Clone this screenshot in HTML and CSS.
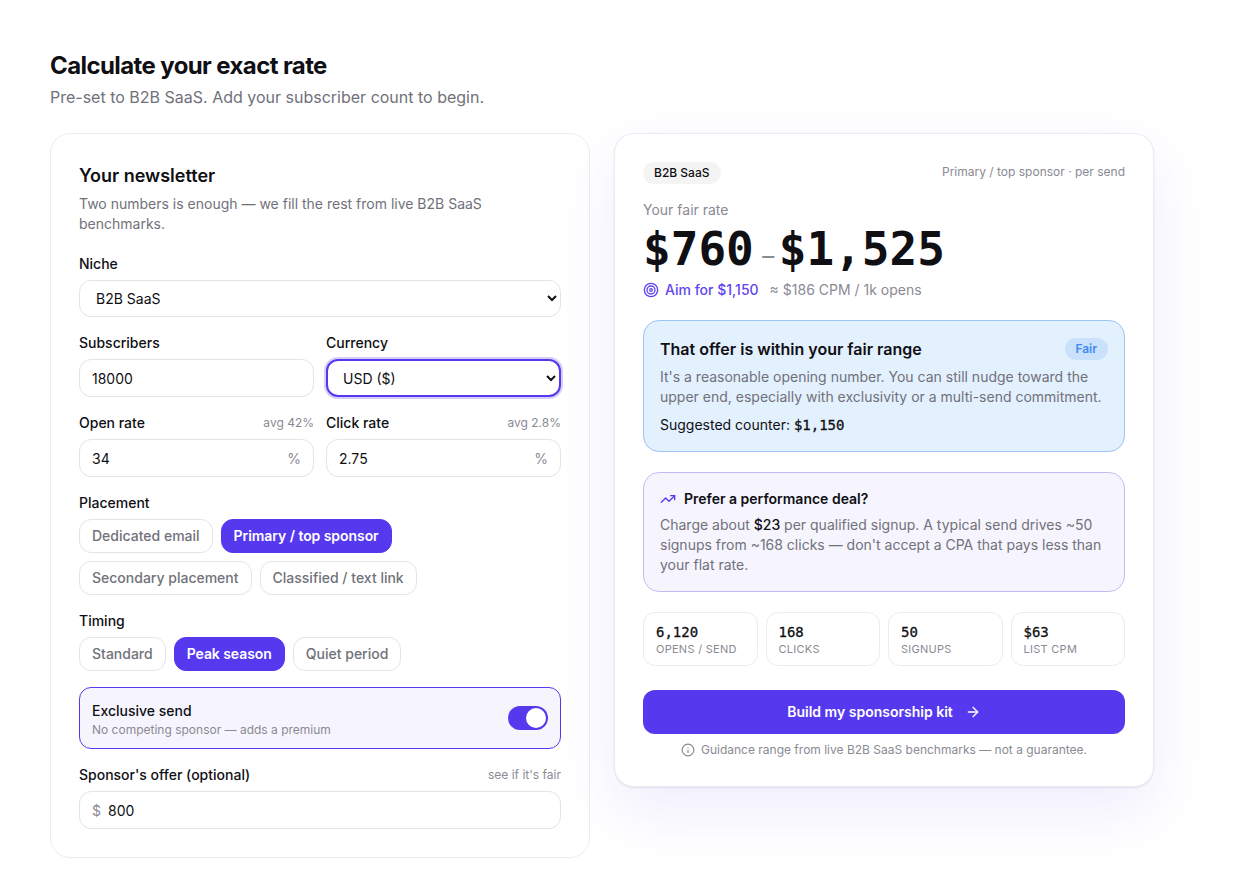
FILE: index.html
```html
<!DOCTYPE html>
<html lang="en">
<head>
    <meta charset="UTF-8">
    <meta name="viewport" content="width=device-width, initial-scale=1.0">
    <title>Calculate your exact rate</title>
    <link rel="stylesheet" href="styles.css">
</head>
<body>
    <main class="page">
        <h1>Calculate your exact rate</h1>
        <p class="subtitle">Pre-set to B2B SaaS. Add your subscriber count to begin.</p>

        <div class="columns">
            <!-- Form -->
            <section class="card form-card">
                <h2>Your newsletter</h2>
                <p class="card-desc">Two numbers is enough — we fill the rest from live B2B SaaS benchmarks.</p>

                <div class="field niche-field">
                    <div class="label-row"><label>Niche</label></div>
                    <select class="control">
                        <option>B2B SaaS</option>
                    </select>
                </div>

                <div class="field-grid">
                    <div class="field">
                        <div class="label-row"><label>Subscribers</label></div>
                        <div class="control input-wrap"><input type="text" value="18000"></div>
                    </div>
                    <div class="field">
                        <div class="label-row"><label>Currency</label></div>
                        <select class="control is-focused">
                            <option>USD ($)</option>
                        </select>
                    </div>
                </div>

                <div class="field-grid">
                    <div class="field">
                        <div class="label-row"><label>Open rate</label><span class="hint">avg 42%</span></div>
                        <div class="control input-wrap"><input type="text" value="34"><span class="unit">%</span></div>
                    </div>
                    <div class="field">
                        <div class="label-row"><label>Click rate</label><span class="hint">avg 2.8%</span></div>
                        <div class="control input-wrap"><input type="text" value="2.75"><span class="unit">%</span></div>
                    </div>
                </div>

                <div class="field">
                    <div class="label-row"><label>Placement</label></div>
                    <div class="chips">
                        <button class="chip">Dedicated email</button>
                        <button class="chip active">Primary / top sponsor</button>
                        <button class="chip">Secondary placement</button>
                        <button class="chip">Classified / text link</button>
                    </div>
                </div>

                <div class="field">
                    <div class="label-row"><label>Timing</label></div>
                    <div class="chips">
                        <button class="chip">Standard</button>
                        <button class="chip active">Peak season</button>
                        <button class="chip">Quiet period</button>
                    </div>
                </div>

                <div class="exclusive">
                    <div>
                        <div class="exclusive-title">Exclusive send</div>
                        <div class="exclusive-desc">No competing sponsor — adds a premium</div>
                    </div>
                    <span class="toggle"><span class="knob"></span></span>
                </div>

                <div class="field">
                    <div class="label-row"><label>Sponsor's offer (optional)</label><span class="hint">see if it's fair</span></div>
                    <div class="control input-wrap"><span class="prefix">$</span><input type="text" value="800"></div>
                </div>
            </section>

            <!-- Result -->
            <section class="card result-card">
                <div class="result-top">
                    <span class="pill">B2B SaaS</span>
                    <span class="result-meta">Primary / top sponsor · per send</span>
                </div>

                <div class="fair-label">Your fair rate</div>
                <div class="rate">$760<span class="rate-dash">–</span>$1,525</div>
                <div class="aim-row">
                    <span class="aim">
                        <svg width="16" height="16" viewBox="0 0 24 24" fill="none" stroke="currentColor" stroke-width="2"><circle cx="12" cy="12" r="10"/><circle cx="12" cy="12" r="6"/><circle cx="12" cy="12" r="2"/></svg>
                        Aim for $1,150
                    </span>
                    <span class="cpm">≈ $186 CPM / 1k opens</span>
                </div>

                <div class="notice fair-box">
                    <div class="notice-head">
                        <h3>That offer is within your fair range</h3>
                        <span class="fair-tag">Fair</span>
                    </div>
                    <p>It's a reasonable opening number. You can still nudge toward the upper end, especially with exclusivity or a multi-send commitment.</p>
                    <div class="counter">Suggested counter: <b class="mono">$1,150</b></div>
                </div>

                <div class="notice perf-box">
                    <div class="perf-head">
                        <svg width="16" height="16" viewBox="0 0 24 24" fill="none" stroke="#5639ee" stroke-width="2" stroke-linecap="round" stroke-linejoin="round"><polyline points="22 7 13.5 15.5 8.5 10.5 2 17"/><polyline points="16 7 22 7 22 13"/></svg>
                        <h4>Prefer a performance deal?</h4>
                    </div>
                    <p>Charge about <b>$23</b> per qualified signup. A typical send drives ~50 signups from ~168 clicks — don't accept a CPA that pays less than your flat rate.</p>
                </div>

                <div class="stats">
                    <div class="stat"><div class="stat-num">6,120</div><div class="stat-label">Opens / send</div></div>
                    <div class="stat"><div class="stat-num">168</div><div class="stat-label">Clicks</div></div>
                    <div class="stat"><div class="stat-num">50</div><div class="stat-label">Signups</div></div>
                    <div class="stat"><div class="stat-num">$63</div><div class="stat-label">List CPM</div></div>
                </div>

                <button class="cta">
                    Build my sponsorship kit
                    <svg width="16" height="16" viewBox="0 0 24 24" fill="none" stroke="currentColor" stroke-width="2" stroke-linecap="round" stroke-linejoin="round"><path d="M5 12h14"/><path d="m12 5 7 7-7 7"/></svg>
                </button>
                <div class="footnote">
                    <svg width="14" height="14" viewBox="0 0 24 24" fill="none" stroke="currentColor" stroke-width="2" stroke-linecap="round" stroke-linejoin="round"><circle cx="12" cy="12" r="10"/><path d="M12 16v-4"/><path d="M12 8h.01"/></svg>
                    Guidance range from live B2B SaaS benchmarks — not a guarantee.
                </div>
            </section>
        </div>
    </main>
</body>
</html>
```

FILE: styles.css
```css
* {
    margin: 0;
    padding: 0;
    box-sizing: border-box;
}

body {
    font-family: Inter, "Liberation Sans", sans-serif;
    background: #fff;
    color: #0f0f14;
    font-size: 14px;
}

.page {
    width: 1104px;
    margin-left: 50px;
    padding-top: 50px;
    padding-bottom: 36px;
}

h1 {
    font-size: 24px;
    line-height: 32px;
    font-weight: 700;
    letter-spacing: -0.025em;
}

.subtitle {
    font-size: 16px;
    line-height: 24px;
    color: #71717a;
    margin-top: 3px;
}

.columns {
    display: grid;
    grid-template-columns: 540px 540px;
    gap: 24px;
    align-items: start;
    margin-top: 24px;
}

.card {
    background: #fff;
    border: 1px solid #ececf0;
    border-radius: 20px;
    padding: 28px;
}

.result-card {
    box-shadow: 0 1px 2px rgba(15, 15, 20, 0.08), 0 24px 60px rgba(86, 57, 238, 0.09);
}

h2 {
    font-size: 18px;
    line-height: 28px;
    font-weight: 600;
}

.card-desc {
    font-size: 14px;
    line-height: 20px;
    color: #71717a;
    margin-top: 4px;
}

.field {
    display: flex;
    flex-direction: column;
    margin-top: 16px;
}

.niche-field {
    margin-top: 20px;
}

.field-grid {
    display: grid;
    grid-template-columns: repeat(2, minmax(0, 1fr));
    gap: 12px;
}

.label-row {
    display: flex;
    justify-content: space-between;
    align-items: flex-start;
    height: 20px;
    margin-bottom: 6px;
}

label {
    font-size: 14px;
    line-height: 20px;
    font-weight: 500;
}

.hint {
    font-size: 12px;
    line-height: 20px;
    color: #8a8a93;
}

.control {
    width: 100%;
    height: 38px;
    background: #fff;
    border: 1px solid #e4e4e8;
    border-radius: 12px;
    font-family: inherit;
    font-size: 14px;
    color: #0f0f14;
}

select.control {
    padding: 0 8px 0 12px;
}

.niche-field select.control {
    height: 37px;
}

select.is-focused {
    border: 2px solid #5639ee;
    box-shadow: 0 0 0 2px rgba(86, 57, 238, 0.25);
    padding-left: 11px;
    padding-right: 7px;
}

.input-wrap {
    display: flex;
    align-items: center;
    padding: 0 12px;
}

.input-wrap input {
    flex: 1;
    min-width: 0;
    border: none;
    outline: none;
    background: transparent;
    font-family: inherit;
    font-size: 14px;
    color: #0f0f14;
}

.unit,
.prefix {
    color: #8a8a93;
    font-size: 14px;
}

.prefix {
    margin-right: 7px;
}

.chips {
    display: flex;
    flex-wrap: wrap;
    gap: 8px;
}

.chip {
    height: 34px;
    padding: 0 12px 1px;
    background: #fff;
    border: 1px solid #e4e4e8;
    border-radius: 12px;
    font-family: inherit;
    font-size: 14px;
    font-weight: 500;
    color: #71717a;
}

.chip.active {
    background: #5639ee;
    border-color: #5639ee;
    color: #fff;
    font-weight: 600;
    letter-spacing: -0.06px;
}

.exclusive {
    display: flex;
    justify-content: space-between;
    align-items: center;
    height: 62px;
    margin-top: 16px;
    padding: 0 12px;
    background: #f6f5fe;
    border: 1px solid #5639ee;
    border-radius: 12px;
}

.exclusive-title {
    font-size: 14px;
    line-height: 20px;
    font-weight: 500;
    margin-top: 2px;
}

.exclusive-desc {
    font-size: 12px;
    line-height: 16px;
    color: #8a8a93;
    margin-top: 1px;
}

.toggle {
    display: flex;
    justify-content: flex-end;
    align-items: center;
    width: 40px;
    height: 24px;
    padding: 2px;
    background: #5639ee;
    border-radius: 12px;
}

.knob {
    width: 20px;
    height: 20px;
    background: #fff;
    border-radius: 50%;
}

.result-top {
    display: flex;
    justify-content: space-between;
    align-items: flex-start;
}

.pill {
    padding: 0 11px;
    height: 22px;
    line-height: 22px;
    background: #f4f4f5;
    border-radius: 11px;
    font-size: 12px;
    font-weight: 500;
}

.result-meta {
    font-size: 12px;
    line-height: 20px;
    color: #8a8a93;
}

.fair-label {
    margin-top: 16px;
    font-size: 14px;
    line-height: 20px;
    color: #8a8a93;
}

.rate {
    font-family: "DejaVu Sans Mono", "Liberation Mono", monospace;
    font-size: 46px;
    line-height: 48px;
    font-weight: 700;
    display: flex;
    align-items: center;
    padding-top: 4px;
    height: 54px;
}

.rate-dash {
    font-family: Inter, sans-serif;
    font-size: 24px;
    line-height: 1;
    font-weight: 400;
    color: #8a8a93;
    width: 25px;
    padding-left: 4px;
    text-align: center;
    margin-top: 14px;
}

.aim-row {
    display: flex;
    align-items: center;
    gap: 11px;
    margin-top: 6px;
    font-size: 14px;
    line-height: 20px;
}

.aim {
    display: flex;
    align-items: center;
    gap: 6px;
    color: #5f45f0;
    font-weight: 500;
}

.cpm {
    color: #8a8a93;
}

.notice {
    border-radius: 16px;
    padding: 16px;
}

.notice p {
    font-size: 14px;
    line-height: 20px;
    color: #71717a;
}

.fair-box {
    margin-top: 20px;
    height: 132px;
    background: #e3f0fd;
    border: 1px solid #9cc5f3;
}

.notice-head {
    display: flex;
    justify-content: space-between;
    align-items: center;
    margin-bottom: 6px;
}

h3 {
    font-size: 16px;
    line-height: 24px;
    font-weight: 600;
}

.fair-tag {
    height: 22px;
    line-height: 22px;
    padding: 0 11px 0 10.5px;
    background: #c9e1fb;
    border-radius: 11px;
    color: #3b8bf0;
    font-size: 12px;
    font-weight: 600;
}

.counter {
    margin-top: 8px;
    font-size: 14px;
    line-height: 20px;
}

.mono {
    font-family: "DejaVu Sans Mono", "Liberation Mono", monospace;
    font-weight: 400;
    font-size: 14px;
    -webkit-text-stroke: 0.3px currentColor;
}

.perf-box {
    margin-top: 20px;
    height: 120px;
    background: #f6f5fe;
    border: 1px solid #c5bbf3;
}

.perf-head {
    display: flex;
    align-items: center;
    gap: 8px;
    margin-bottom: 6px;
}

h4 {
    font-size: 14px;
    line-height: 20px;
    font-weight: 600;
}

.perf-box b {
    color: #0f0f14;
    font-weight: 500;
}

.stats {
    display: grid;
    grid-template-columns: repeat(4, 1fr);
    gap: 8px;
    margin-top: 20px;
}

.stat {
    height: 54px;
    padding: 9px 12px;
    border: 1px solid #ececf0;
    border-radius: 12px;
}

.stat-num {
    font-family: "DejaVu Sans Mono", "Liberation Mono", monospace;
    font-size: 14px;
    line-height: 20px;
    font-weight: 400;
    -webkit-text-stroke: 0.3px currentColor;
}

.stat-label {
    font-size: 11px;
    line-height: 14px;
    color: #8a8a93;
    text-transform: uppercase;
    letter-spacing: 0.025em;
}

.cta {
    width: 100%;
    height: 44px;
    margin-top: 24px;
    padding-bottom: 2px;
    display: flex;
    justify-content: center;
    align-items: center;
    gap: 12px;
    background: #5639ee;
    border: none;
    border-radius: 12px;
    color: #fff;
    font-family: inherit;
    font-size: 14px;
    font-weight: 600;
}

.cta svg {
    margin-top: 2px;
}

.footnote {
    display: flex;
    justify-content: center;
    align-items: center;
    gap: 6px;
    margin-top: 8px;
    font-size: 12px;
    line-height: 16px;
    color: #8a8a93;
}
```
